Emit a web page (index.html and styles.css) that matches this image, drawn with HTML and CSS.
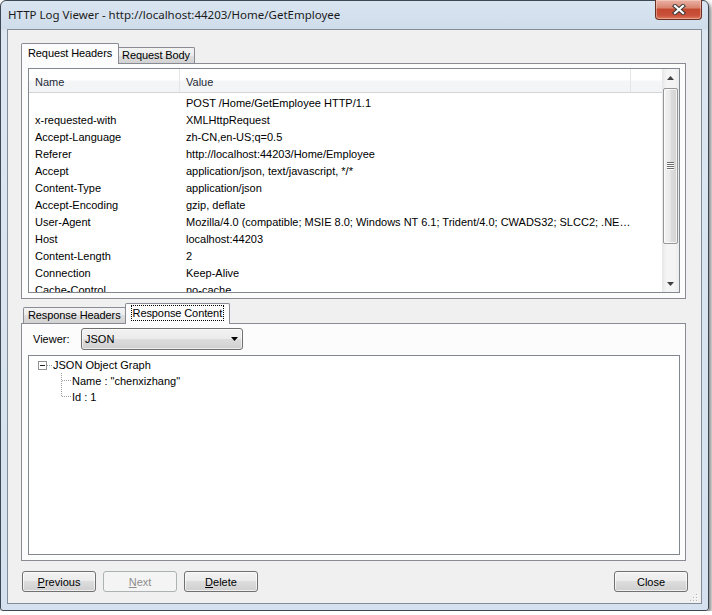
FILE: index.html
```html
<!DOCTYPE html>
<html>
<head>
<meta charset="utf-8">
<title>HTTP Log Viewer</title>
<link rel="stylesheet" href="styles.css">
</head>
<body>
<div class="window">
  <div class="titlebar">
    <div class="title">HTTP Log Viewer - http://localhost:44203/Home/GetEmployee</div>
    <div class="close">
      <svg width="14" height="11" viewBox="0 0 14 11">
        <path d="M3 2 L11 9 M11 2 L3 9" stroke="#3b3b3b" stroke-width="4.2" stroke-linecap="square" fill="none"/>
        <path d="M3 2 L11 9 M11 2 L3 9" stroke="#ffffff" stroke-width="2.2" stroke-linecap="square" fill="none"/>
      </svg>
    </div>
  </div>
  <div class="client">
    <div class="tabstrip">
      <div class="tab sel">Request Headers</div>
      <div class="tab after-sel">Request Body</div>
    </div>
    <div class="panel panel-top">
      <div class="listview">
        <div class="lv-main">
          <div class="lv-head">
            <div class="hc c1">Name</div>
            <div class="hc c2">Value</div>
            <div class="hc c3"></div>
          </div>
          <div class="lv-rows">
            <div class="row"><div class="cell c1"></div><div class="cell c2">POST /Home/GetEmployee HTTP/1.1</div></div>
            <div class="row"><div class="cell c1">x-requested-with</div><div class="cell c2">XMLHttpRequest</div></div>
            <div class="row"><div class="cell c1">Accept-Language</div><div class="cell c2">zh-CN,en-US;q=0.5</div></div>
            <div class="row"><div class="cell c1">Referer</div><div class="cell c2">http://localhost:44203/Home/Employee</div></div>
            <div class="row"><div class="cell c1">Accept</div><div class="cell c2">application/json, text/javascript, */*</div></div>
            <div class="row"><div class="cell c1">Content-Type</div><div class="cell c2">application/json</div></div>
            <div class="row"><div class="cell c1">Accept-Encoding</div><div class="cell c2">gzip, deflate</div></div>
            <div class="row"><div class="cell c1">User-Agent</div><div class="cell c2">Mozilla/4.0 (compatible; MSIE 8.0; Windows NT 6.1; Trident/4.0; CWADS32; SLCC2; .NE…</div></div>
            <div class="row"><div class="cell c1">Host</div><div class="cell c2">localhost:44203</div></div>
            <div class="row"><div class="cell c1">Content-Length</div><div class="cell c2">2</div></div>
            <div class="row"><div class="cell c1">Connection</div><div class="cell c2">Keep-Alive</div></div>
            <div class="row"><div class="cell c1">Cache-Control</div><div class="cell c2">no-cache</div></div>
          </div>
        </div>
        <div class="scrollbar">
          <div class="sb-btn">
            <svg width="7" height="4" viewBox="0 0 7 4"><path d="M0 4 L3.5 0 L7 4 Z" fill="#404040"/></svg>
          </div>
          <div class="sb-track">
            <div class="thumb">
              <svg width="7" height="8" viewBox="0 0 7 8">
                <path d="M0 0.5H7M0 2.5H7M0 4.5H7M0 6.5H7" stroke="#6d6d6d" stroke-width="1"/>
                <path d="M0 1.5H7M0 3.5H7M0 5.5H7M0 7.5H7" stroke="#ffffff" stroke-width="1"/>
              </svg>
            </div>
          </div>
          <div class="sb-btn">
            <svg width="7" height="4" viewBox="0 0 7 4"><path d="M0 0 L7 0 L3.5 4 Z" fill="#404040"/></svg>
          </div>
        </div>
      </div>
    </div>
    <div class="tabstrip tabstrip-bottom">
      <div class="tab">Response Headers</div>
      <div class="tab sel sel-second"><span class="focus">Response Content</span></div>
    </div>
    <div class="panel panel-bottom">
      <div class="viewer-row">
        <span class="viewer-label">Viewer:</span>
        <div class="combo">
          <span>JSON</span>
          <svg class="combo-arrow" width="7" height="4" viewBox="0 0 7 4"><path d="M0 0 L7 0 L3.5 4 Z" fill="#000"/></svg>
        </div>
      </div>
      <div class="tree">
        <div class="node root">
          <svg class="expander" width="15" height="16" viewBox="0 0 15 16">
            <rect x="0.5" y="4.5" width="8" height="8" fill="#fff" stroke="#919191"/>
            <path d="M2 8.5H7" stroke="#1e1e1e"/>
            <path d="M9 8.5H15" stroke="#a0a0a0" stroke-dasharray="1 1"/>
          </svg>
          <span>JSON Object Graph</span>
        </div>
        <div class="node child">
          <svg class="conn" width="11" height="16" viewBox="0 0 11 16">
            <path d="M0.5 0V16" stroke="#a0a0a0" stroke-dasharray="1 1"/>
            <path d="M1 7.5H11" stroke="#a0a0a0" stroke-dasharray="1 1"/>
          </svg>
          <span>Name : "chenxizhang"</span>
        </div>
        <div class="node child">
          <svg class="conn" width="11" height="16" viewBox="0 0 11 16">
            <path d="M0.5 0V8" stroke="#a0a0a0" stroke-dasharray="1 1"/>
            <path d="M1 7.5H11" stroke="#a0a0a0" stroke-dasharray="1 1"/>
          </svg>
          <span>Id : 1</span>
        </div>
      </div>
    </div>
    <div class="buttons">
      <div class="btn"><span><u>P</u>revious</span></div>
      <div class="btn disabled"><span><u>N</u>ext</span></div>
      <div class="btn"><span><u>D</u>elete</span></div>
      <div class="spacer"></div>
      <div class="btn">Close</div>
    </div>
    <svg class="grip" width="8" height="8" viewBox="0 0 8 8">
      <rect x="6" y="0" width="1" height="1" fill="#b5b5b5"/>
      <rect x="3" y="3" width="1" height="1" fill="#b5b5b5"/>
      <rect x="6" y="3" width="1" height="1" fill="#b5b5b5"/>
      <rect x="0" y="6" width="1" height="1" fill="#b5b5b5"/>
      <rect x="3" y="6" width="1" height="1" fill="#b5b5b5"/>
      <rect x="6" y="6" width="1" height="1" fill="#b5b5b5"/>
      <rect x="7" y="1" width="1" height="1" fill="#fff"/>
      <rect x="4" y="4" width="1" height="1" fill="#fff"/>
      <rect x="7" y="4" width="1" height="1" fill="#fff"/>
      <rect x="1" y="7" width="1" height="1" fill="#fff"/>
      <rect x="4" y="7" width="1" height="1" fill="#fff"/>
      <rect x="7" y="7" width="1" height="1" fill="#fff"/>
    </svg>
  </div>
</div>
</body>
</html>
```

FILE: styles.css
```css
html, body {
  margin: 0;
  background: #ffffff;
}

body {
  font-family: "Liberation Sans", Arial, sans-serif;
  font-size: 11px;
  color: #000;
}

.window {
  width: 709px;
  height: 611px;
  box-sizing: border-box;
  border: 1px solid #3e4854;
  border-radius: 6px 6px 3px 3px;
  background: linear-gradient(#d9e5f1, #cfdcea 28px, #dbe6f1 29px, #d5e1ee);
  padding: 0 6px 6px;
  box-shadow: 2px 3px 5px rgba(0, 0, 0, 0.55);
  display: flex;
  flex-direction: column;
}

.titlebar {
  height: 28px;
  display: flex;
  justify-content: space-between;
  align-items: flex-start;
  flex: none;
}

.title {
  font-family: "Noto Sans", "Open Sans", sans-serif;
  font-size: 11.5px;
  line-height: 28px;
  padding-left: 1px;
  color: #1b1b1b;
  white-space: nowrap;
}

.close {
  width: 47px;
  height: 20px;
  margin-top: -1px;
  box-sizing: border-box;
  border: 1px solid #6b2e22;
  border-top: none;
  border-radius: 0 0 4px 4px;
  background: linear-gradient(#eab2a5, #d98672 40%, #c4492f 50%, #c9503a 80%, #dd7a5c);
  display: flex;
  align-items: center;
  justify-content: center;
  box-shadow: inset 0 0 0 1px rgba(255, 220, 210, 0.45);
}

.client {
  flex: 1;
  border: 1px solid #838d98;
  background: #f0f0f0;
  padding: 13px 15px 0 13px;
  display: flex;
  flex-direction: column;
  position: relative;
}

.tabstrip {
  height: 20px;
  display: flex;
  align-items: flex-end;
  padding-left: 2px;
  flex: none;
}

.tabstrip-bottom {
  margin-top: 4px;
}

.tab {
  height: 16px;
  box-sizing: border-box;
  border: 1px solid #898c95;
  border-bottom: none;
  border-radius: 2px 2px 0 0;
  background: linear-gradient(#f3f3f3, #ebebeb 50%, #dedede 50%, #d2d2d2);
  padding: 0 4px;
  line-height: 15px;
  white-space: nowrap;
  letter-spacing: -0.1px;
}

.tab.sel {
  height: 21px;
  margin: 0 -2px -1px;
  background: #fcfcfc;
  padding: 0 6px;
  line-height: 19px;
  position: relative;
  z-index: 1;
}

.tab.sel-second {
  margin-left: -1px;
  padding: 0 6px;
}

.tab.after-sel {
  margin-left: 0;
}

.focus {
  outline: 1px dotted #000;
  outline-offset: 0;
  padding: 1px 1px;
}

.panel {
  border: 1px solid #898c95;
  background: #fcfcfc;
  padding: 4px 5px 5px 6px;
  box-sizing: border-box;
  flex: none;
  display: flex;
  flex-direction: column;
}

.panel-top {
  height: 236px;
}

.panel-bottom {
  height: 238px;
}

.listview {
  height: 225px;
  box-sizing: border-box;
  border: 1px solid #828790;
  background: #fff;
  display: flex;
}

.lv-main {
  flex: 1;
  overflow: hidden;
  display: flex;
  flex-direction: column;
  min-width: 0;
}

.lv-head {
  height: 24px;
  flex: none;
  box-sizing: border-box;
  border-bottom: 1px solid #d5d5d5;
  background: linear-gradient(#ffffff, #ffffff 45%, #f4f5f7 55%, #f3f4f6);
  display: flex;
}

.hc {
  box-sizing: border-box;
  line-height: 23px;
  padding-top: 2px;
  color: #1d2a39;
}

.hc.c1 {
  width: 151px;
  padding-left: 6px;
  border-right: 1px solid #e3e5e8;
}

.hc.c2 {
  width: 451px;
  padding-left: 6px;
  border-right: 1px solid #e3e5e8;
}

.hc.c3 {
  flex: 1;
}

.lv-rows {
  padding-top: 2px;
  overflow: hidden;
  flex: 1;
}

.row {
  display: flex;
  height: 17px;
  line-height: 17px;
  white-space: nowrap;
}

.cell {
  box-sizing: border-box;
  overflow: hidden;
  white-space: nowrap;
}

.cell.c1 {
  width: 151px;
  padding-left: 6px;
}

.cell.c2 {
  width: 451px;
  padding: 0 4px 0 6px;
}

.scrollbar {
  width: 17px;
  flex: none;
  display: flex;
  flex-direction: column;
  background: linear-gradient(to right, #e6e6e6, #f4f4f4 25%, #f4f4f4 75%, #ebebeb);
}

.sb-btn {
  height: 17px;
  flex: none;
  display: flex;
  align-items: center;
  justify-content: center;
}

.sb-track {
  flex: 1;
  padding: 2px 1px 0;
}

.thumb {
  height: 156px;
  box-sizing: border-box;
  border: 1px solid #979797;
  border-radius: 2px;
  background: linear-gradient(to right, #f3f3f3, #e9e9e9 45%, #dcdcdc 55%, #d3d3d3);
  box-shadow: inset 0 0 0 1px rgba(255, 255, 255, 0.7);
  display: flex;
  align-items: center;
  justify-content: center;
}

.viewer-row {
  height: 22px;
  flex: none;
  display: flex;
  align-items: center;
  margin-bottom: 5px;
}

.viewer-label {
  padding-left: 5px;
  box-sizing: border-box;
  width: 53px;
}

.combo {
  width: 162px;
  height: 22px;
  box-sizing: border-box;
  border: 1px solid #707070;
  border-radius: 3px;
  background: linear-gradient(#f2f2f2, #ebebeb 50%, #dddddd 50%, #cfcfcf);
  box-shadow: inset 0 0 0 1px rgba(255, 255, 255, 0.6);
  display: flex;
  align-items: center;
  padding-left: 3px;
}

.combo-arrow {
  margin-left: auto;
  margin-right: 4px;
}

.tree {
  flex: 1;
  border: 1px solid #828790;
  background: #fff;
  padding-top: 1px;
}

.node {
  height: 16px;
  line-height: 16px;
  display: flex;
  align-items: center;
  white-space: nowrap;
}

.node svg {
  display: block;
  flex: none;
}

.node.root {
  padding-left: 9px;
}

.node.child {
  padding-left: 32px;
}

.buttons {
  margin-top: 10px;
  margin-left: 1px;
  margin-right: -2px;
  display: flex;
  gap: 7px;
  flex: none;
}

.btn {
  width: 74px;
  height: 21px;
  box-sizing: border-box;
  border: 1px solid #707070;
  border-radius: 3px;
  background: linear-gradient(#f2f2f2, #ebebeb 50%, #dddddd 50%, #cfcfcf);
  box-shadow: inset 0 0 0 1px rgba(255, 255, 255, 0.65);
  display: flex;
  align-items: center;
  justify-content: center;
  color: #000;
}

.btn.disabled {
  border-color: #adb2b5;
  background: #f4f4f4;
  color: #8d8d8d;
  box-shadow: none;
}

.spacer {
  flex: 1;
}

.grip {
  position: absolute;
  right: 3px;
  bottom: 1px;
}
```
